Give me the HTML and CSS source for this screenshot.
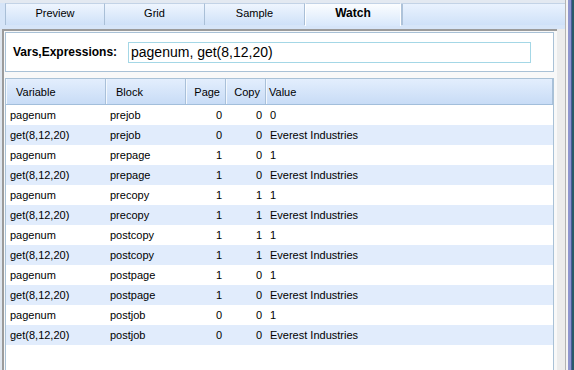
FILE: index.html
```html
<!DOCTYPE html>
<html>
<head>
    <title>Watch</title>
    <link rel="stylesheet" href="styles.css">
</head>
<body>
    <div class="window">
        <div class="main">
            <div class="tabbar">
                <div class="tab first">Preview</div>
                <div class="tab">Grid</div>
                <div class="tab">Sample</div>
                <div class="tab active">Watch</div>
                <div class="tab-fill"></div>
            </div>

            <div class="page">
                <div class="panel">
                    <div class="vars-box">
                        <label class="vars-label" for="vars">Vars,Expressions:</label>
                        <input class="vars-input" type="text" id="vars" value="pagenum, get(8,12,20)">
                    </div>

                    <div class="grid-box">
                        <div class="grid-head">
                            <div class="col-var">Variable</div>
                            <div class="col-block">Block</div>
                            <div class="col-num">Page</div>
                            <div class="col-num">Copy</div>
                            <div class="col-value">Value</div>
                        </div>
                        <div class="grid-body">
                            <div class="grid-row"><div>pagenum</div><div>prejob</div><div class="num">0</div><div class="num">0</div><div>0</div></div>
                            <div class="grid-row"><div>get(8,12,20)</div><div>prejob</div><div class="num">0</div><div class="num">0</div><div>Everest Industries</div></div>
                            <div class="grid-row"><div>pagenum</div><div>prepage</div><div class="num">1</div><div class="num">0</div><div>1</div></div>
                            <div class="grid-row"><div>get(8,12,20)</div><div>prepage</div><div class="num">1</div><div class="num">0</div><div>Everest Industries</div></div>
                            <div class="grid-row"><div>pagenum</div><div>precopy</div><div class="num">1</div><div class="num">1</div><div>1</div></div>
                            <div class="grid-row"><div>get(8,12,20)</div><div>precopy</div><div class="num">1</div><div class="num">1</div><div>Everest Industries</div></div>
                            <div class="grid-row"><div>pagenum</div><div>postcopy</div><div class="num">1</div><div class="num">1</div><div>1</div></div>
                            <div class="grid-row"><div>get(8,12,20)</div><div>postcopy</div><div class="num">1</div><div class="num">1</div><div>Everest Industries</div></div>
                            <div class="grid-row"><div>pagenum</div><div>postpage</div><div class="num">1</div><div class="num">0</div><div>1</div></div>
                            <div class="grid-row"><div>get(8,12,20)</div><div>postpage</div><div class="num">1</div><div class="num">0</div><div>Everest Industries</div></div>
                            <div class="grid-row"><div>pagenum</div><div>postjob</div><div class="num">0</div><div class="num">0</div><div>1</div></div>
                            <div class="grid-row"><div>get(8,12,20)</div><div>postjob</div><div class="num">0</div><div class="num">0</div><div>Everest Industries</div></div>
                        </div>
                    </div>
                </div>
                <div class="gutter"></div>
            </div>
        </div>
        <div class="edge"></div>
    </div>
</body>
</html>
```

FILE: styles.css
```css
body {
    margin: 0;
    padding: 0;
    font-family: "Liberation Sans", Arial, sans-serif;
    font-size: 11px;
    color: #000;
    background-color: #ffffff;
}

.window {
    display: flex;
    height: 370px;
    overflow: hidden;
}

.main {
    width: 565px;
    display: flex;
    flex-direction: column;
    background-color: #dfe6ef;
}

/* Tab strip */
.tabbar {
    height: 29px;
    box-sizing: border-box;
    padding: 3px 0 0 5px;
    display: flex;
    align-items: flex-start;
    background: linear-gradient(#e3e9f1 0, #e3e9f1 3px, #d6e5f8 3px);
}

.tab {
    width: 100px;
    height: 22px;
    box-sizing: border-box;
    display: flex;
    align-items: center;
    justify-content: center;
    padding-bottom: 3px;
    border-right: 1px solid #a9bfd7;
    border-top: 1px solid #c3d3e6;
    background: linear-gradient(#eef5fe, #cfe1f8);
}

.tab.first {
    border-left: 1px solid #a9bfd7;
}

.tab.active {
    width: 96px;
    height: 23px;
    font-size: 12px;
    font-weight: bold;
    border-left: 1px solid #ffffff;
    border-right: 1px solid #ffffff;
    background: linear-gradient(#fbfdff, #d8e8fb);
    padding-bottom: 5px;
}

.tab-fill {
    flex: 1;
    height: 22px;
    border-top: 1px solid #c3d3e6;
    box-sizing: border-box;
    box-shadow: inset 2px 0 #aec3da;
    background: linear-gradient(#e9f2fe, #cfe1f8);
}

/* Page area */
.page {
    flex: 1;
    display: flex;
}

.panel {
    width: 549px;
    margin-left: 2px;
    padding: 1px 3px 0 1px;
    border-top: 2px solid #9b9b9b;
    border-left: 2px solid #9b9b9b;
    background-color: #f8f8f8;
    display: flex;
    flex-direction: column;
}

.gutter {
    width: 8px;
    background-color: #ececec;
}

.edge {
    width: 9px;
    background: linear-gradient(to right,
        #b3b3b3 0, #b3b3b3 1px,
        #f4f4f4 1px, #f4f4f4 3px,
        #8f96cf 3px, #8f96cf 6px,
        #4b5b99 6px, #4b5b99 7px,
        #28596a 7px);
}

/* Expression box */
.vars-box {
    height: 40px;
    box-sizing: border-box;
    border: 1px solid #a9c1d6;
    background-color: #ffffff;
    display: flex;
    align-items: center;
    padding-left: 7px;
}

.vars-label {
    width: 115px;
    font-size: 12px;
    font-weight: bold;
}

.vars-input {
    width: 403px;
    height: 21px;
    box-sizing: border-box;
    margin: 0;
    padding: 0 2px;
    border: 1px solid #a4d7e6;
    font-family: "Liberation Sans", Arial, sans-serif;
    font-size: 14px;
    color: #000;
    outline: none;
}

/* Watch grid */
.grid-box {
    flex: 1;
    margin-top: 6px;
    border: 1px solid #a9c1d6;
    border-bottom: none;
    background-color: #ffffff;
}

.grid-head,
.grid-row {
    display: grid;
    grid-template-columns: 100px 80px 40px 40px 1fr;
}

.grid-head {
    height: 26px;
    box-sizing: border-box;
    background: linear-gradient(#e3eefd, #c8dcf6);
    border-bottom: 1px solid #a2bedb;
}

.grid-head div {
    display: flex;
    align-items: center;
    border-right: 1px solid #a9c0d9;
    box-shadow: inset 1px 0 #f3f8fe;
}

.grid-head .col-var,
.grid-head .col-block {
    padding-left: 10px;
}

.grid-head .col-num {
    justify-content: flex-end;
    padding-right: 5px;
}

.grid-head .col-value {
    padding-left: 3px;
}

.grid-row {
    height: 20px;
    align-items: center;
}

.grid-row:nth-child(even) {
    background-color: #e1ecfc;
}

.grid-row div {
    padding-left: 4px;
    white-space: nowrap;
}

.grid-row .num {
    padding-left: 0;
    padding-right: 4px;
    text-align: right;
}
```
